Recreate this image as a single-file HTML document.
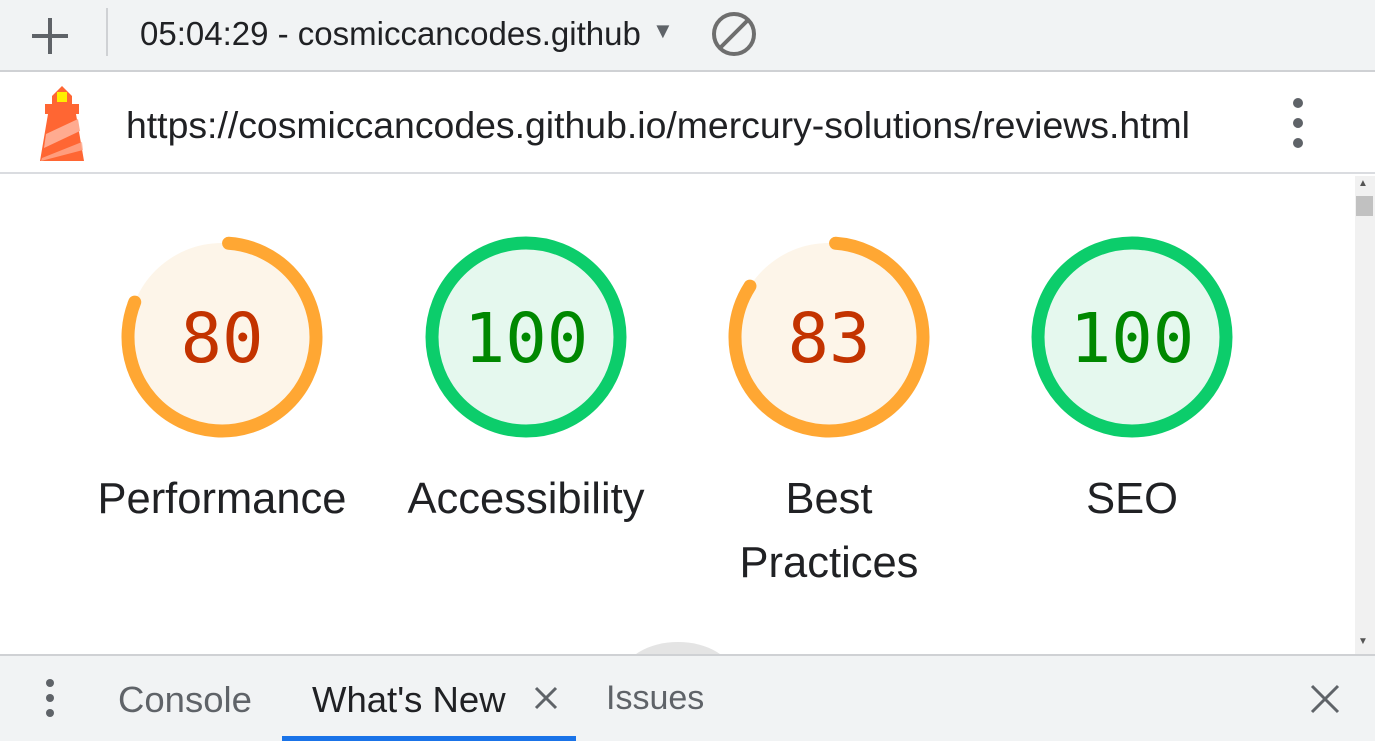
<!DOCTYPE html>
<html><head><meta charset="utf-8"><style>
*{margin:0;padding:0;box-sizing:border-box}
body{width:1375px;height:741px;overflow:hidden;background:#fff;font-family:"Liberation Sans",sans-serif;position:relative}
.top{position:absolute;left:0;top:0;width:1375px;height:72px;background:#f1f3f4;border-bottom:2px solid #cfd1d4}
.url{position:absolute;left:0;top:74px;width:1375px;height:100px;background:#fff;border-bottom:2px solid #dadce0}
.bot{position:absolute;left:0;top:654px;width:1375px;height:87px;background:#f1f3f4;border-top:2px solid #cfd1d4}
.t{position:absolute;white-space:nowrap}
.lbl{position:absolute;font-size:43.5px;color:#202124;text-align:center;width:320px;line-height:64px}
</style></head><body>
<div class="top">
 <svg style="position:absolute;left:30px;top:16px" width="40" height="40"><path d="M20 2V38M2 20H38" stroke="#5f6368" stroke-width="4"/></svg>
 <div style="position:absolute;left:106px;top:8px;width:2px;height:48px;background:#cfd1d4"></div>
 <div class="t" style="left:140px;top:15px;font-size:33px;color:#202124;width:502px;overflow:hidden">05:04:29 - cosmiccancodes.github.io</div>
 <div class="t" style="left:652px;top:18px;font-size:22px;color:#5f6368">▼</div>
 <svg style="position:absolute;left:711px;top:12px" width="48" height="44"><circle cx="23" cy="22" r="20" fill="none" stroke="#6e6e6e" stroke-width="4"/><line x1="9" y1="36" x2="37" y2="8" stroke="#6e6e6e" stroke-width="4"/></svg>
</div>
<div class="url">
 <svg style="position:absolute;left:38px;top:12px" width="50" height="76" viewBox="0 0 50 76">
  <polygon points="14,10 24,0 34,10 34,18 14,18" fill="#ff6633"/>
  <rect x="7" y="18" width="34" height="10" fill="#ff6633"/>
  <polygon points="10,28 38,28 46,75 2,75" fill="#ff6633"/>
  <rect x="19" y="6" width="10" height="10" fill="#ffee00"/>
  <polygon points="8,48 40,33 42,45 6,62" fill="#ffab90"/>
  <polygon points="4,72 44,56 45,64 3,75" fill="#ffab90" opacity=".8"/>
 </svg>
 <div class="t" style="left:126px;top:30px;font-size:37.4px;color:#202124">https://cosmiccancodes.github.io/mercury-solutions/reviews.html</div>
 <svg style="position:absolute;left:1288px;top:24px" width="20" height="54"><circle cx="10" cy="5" r="5" fill="#5f6368"/><circle cx="10" cy="25" r="5" fill="#5f6368"/><circle cx="10" cy="45" r="5" fill="#5f6368"/></svg>
</div>
<div style="position:absolute;left:1355px;top:176px;width:20px;height:478px;background:#f1f1f1"></div>
<div style="position:absolute;left:1356px;top:196px;width:17px;height:20px;background:#c1c1c1"></div>
<div class="t" style="left:1358px;top:178px;font-size:10px;color:#555">▲</div>
<div class="t" style="left:1358px;top:636px;font-size:10px;color:#555">▼</div>
<svg style="position:absolute;left:0;top:176px" width="1355" height="478">
 <g transform="translate(222,161)"><circle r="94" fill="#fdf5e9"/><circle r="94" fill="none" stroke="#ffa733" stroke-width="13" stroke-linecap="round" stroke-dasharray="472 600" transform="rotate(-86)"/><text y="25" text-anchor="middle" font-family="DejaVu Sans Mono,monospace" font-size="69" fill="#c33300">80</text></g>
 <g transform="translate(526,161)"><circle r="94" fill="#e5f8ee"/><circle r="94" fill="none" stroke="#0ccd6b" stroke-width="13"/><text y="25" text-anchor="middle" font-family="DejaVu Sans Mono,monospace" font-size="69" fill="#008800">100</text></g>
 <g transform="translate(829,161)"><circle r="94" fill="#fdf5e9"/><circle r="94" fill="none" stroke="#ffa733" stroke-width="13" stroke-linecap="round" stroke-dasharray="490 600" transform="rotate(-86)"/><text y="25" text-anchor="middle" font-family="DejaVu Sans Mono,monospace" font-size="69" fill="#c33300">83</text></g>
 <g transform="translate(1132,161)"><circle r="94" fill="#e5f8ee"/><circle r="94" fill="none" stroke="#0ccd6b" stroke-width="13"/><text y="25" text-anchor="middle" font-family="DejaVu Sans Mono,monospace" font-size="69" fill="#008800">100</text></g>
 <ellipse cx="678" cy="500" rx="55" ry="34" fill="#e4e4e4"/>
</svg>
<div class="lbl" style="left:62px;top:467px">Performance</div>
<div class="lbl" style="left:366px;top:467px">Accessibility</div>
<div class="lbl" style="left:669px;top:467px">Best<br>Practices</div>
<div class="lbl" style="left:972px;top:467px">SEO</div>
<div class="bot">
 <svg style="position:absolute;left:40px;top:22px" width="20" height="42"><circle cx="10" cy="5" r="4" fill="#5f6368"/><circle cx="10" cy="20" r="4" fill="#5f6368"/><circle cx="10" cy="35" r="4" fill="#5f6368"/></svg>
 <div class="t" style="left:118px;top:23px;font-size:36.5px;color:#5f6368">Console</div>
 <div class="t" style="left:312px;top:23px;font-size:36.5px;color:#202124">What's New</div>
 <svg style="position:absolute;left:534px;top:30px" width="24" height="24"><path d="M2 2L22 22M22 2L2 22" stroke="#5f6368" stroke-width="3"/></svg>
 <div class="t" style="left:606px;top:23px;font-size:34px;color:#5f6368">Issues</div>
 <svg style="position:absolute;left:1310px;top:28px" width="30" height="30"><path d="M2 2L28 28M28 2L2 28" stroke="#5f6368" stroke-width="3"/></svg>
 <div style="position:absolute;left:282px;top:80px;width:294px;height:5px;background:#1a73e8"></div>
</div>
</body></html>
